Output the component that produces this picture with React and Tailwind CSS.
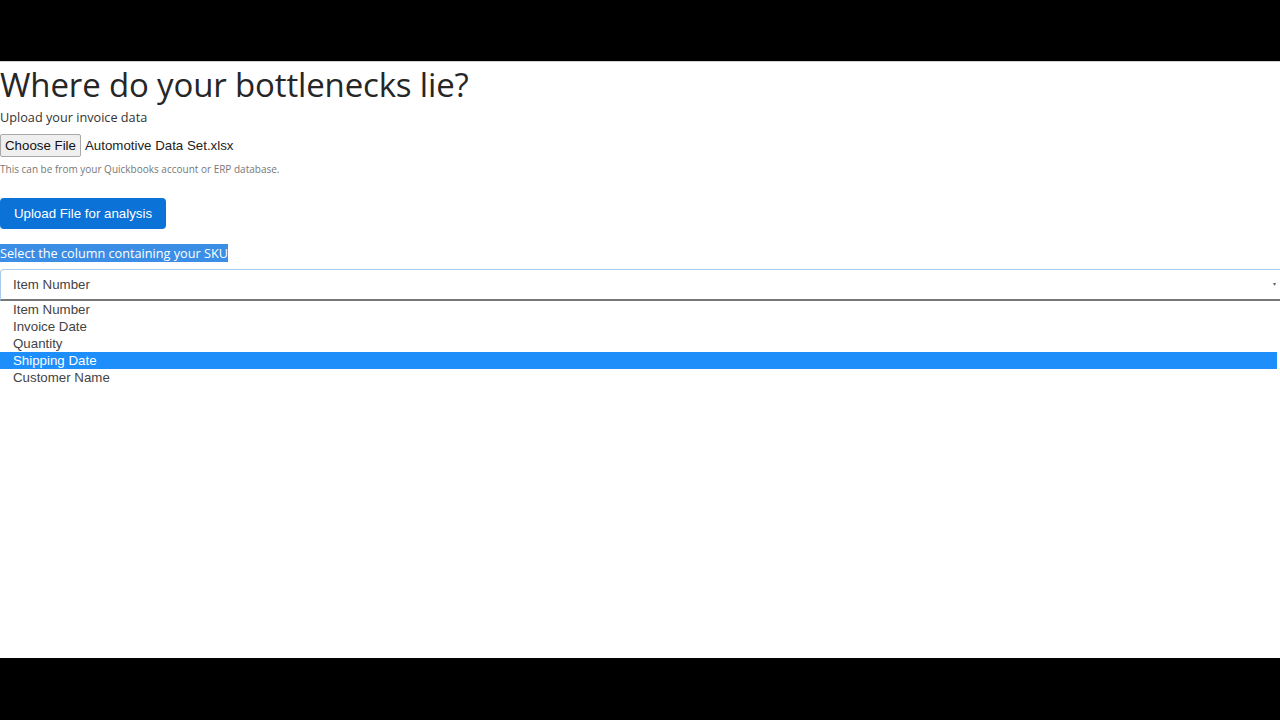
export default function App() {
  const options = ["Item Number", "Invoice Date", "Quantity", "Shipping Date", "Customer Name"];
  const selected = "Shipping Date";

  return (
    <div className="flex h-[720px] w-[1280px] flex-col overflow-hidden bg-black">
      <div className="h-[61px] shrink-0 bg-black" />
      <div className="h-[597px] shrink-0 border-t border-[#cfcfcf] bg-white">
        <h1 className="mt-[2px] font-['Open_Sans',sans-serif] text-[33px] font-medium leading-[42px] tracking-[-0.15px] text-[#262626]">
          Where do your bottlenecks lie?
        </h1>
        <p className="mt-[2px] font-['Open_Sans',sans-serif] text-[12.7px] leading-[18px] text-[#333]">
          Upload your invoice data
        </p>

        <div className="mt-[8px] flex items-center font-['Liberation_Sans',Arial,sans-serif] text-[13.3px] text-[#222]">
          <button
            className="h-[23px] rounded-[2px] border border-[#a9a9a9] bg-[#efefef] px-[4px] leading-[21px] text-[#111]"
            type="button"
          >
            Choose File
          </button>
          <span className="ml-[4px]">Automotive Data Set.xlsx</span>
        </div>

        <p className="mt-[5px] font-['Open_Sans',sans-serif] text-[10px] leading-[14px] text-[#777]">
          This can be from your Quickbooks account or ERP database.
        </p>

        <button
          className="mt-[22px] h-[31px] w-[166px] rounded-[4px] bg-[#0b72d7] font-['Liberation_Sans',Arial,sans-serif] text-[13.3px] text-white"
          type="button"
        >
          Upload File for analysis
        </button>

        <div className="mt-[11px] h-[17px]">
          <span className="bg-[#3a8ee6] font-['Open_Sans',sans-serif] text-[12.7px] leading-[17px] text-white">
            Select the column containing your SKU
          </span>
        </div>

        <div className="mt-[12px] flex h-[32px] items-center justify-between rounded-tl-[4px] border-t border-l border-[#a8cdef] border-b-2 border-b-[#777] bg-white pl-[12px] pr-[4px] font-['Liberation_Sans',Arial,sans-serif] text-[13.3px] text-[#444]">
          <span>Item Number</span>
          <span className="text-[6px] text-[#666]">▾</span>
        </div>

        <ul className="font-['Liberation_Sans',Arial,sans-serif] text-[13.3px] leading-[17px]">
          {options.map((option) => (
            <li
              key={option}
              className={`flex h-[17px] items-center pl-[13px] ${option === selected ? "mr-[3px] bg-[#1e8efb] text-white" : "text-[#444]"}`}
            >
              {option}
            </li>
          ))}
        </ul>
      </div>
      <div className="h-[62px] shrink-0 bg-black" />
    </div>
  );
}
